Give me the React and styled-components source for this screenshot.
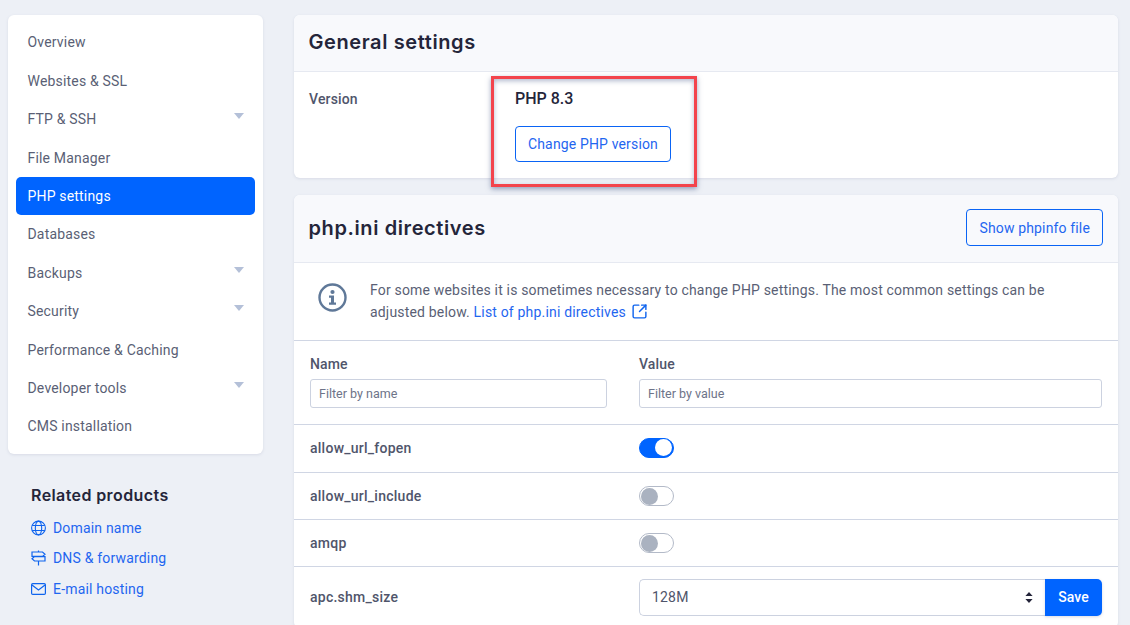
import React from "react";
import styled, { createGlobalStyle } from "styled-components";
import { SquareArrowOutUpRight } from "lucide-react";

const GlobalStyle = createGlobalStyle`
  * { box-sizing: border-box; }
  html, body {
    margin: 0;
    height: 625px;
    overflow: hidden;
    background: #edf0f6;
    font-family: Roboto, "Liberation Sans", sans-serif;
    font-size: 14px;
    color: #50556b;
  }
`;

const Page = styled.div`
  display: flex;
  align-items: flex-start;
  gap: 31px;
  padding: 15px 12px 0 8px;
`;

const Sidebar = styled.aside`
  width: 255px;
  flex-shrink: 0;
`;

const Card = styled.div`
  background: #fff;
  border-radius: 6px;
  box-shadow: 0 1px 3px rgba(120, 130, 160, 0.18);
`;

const Menu = styled(Card)`
  padding: 8.3px 8px;
  display: flex;
  flex-direction: column;
`;

const MenuItem = styled.a`
  height: 38.4px;
  display: flex;
  align-items: center;
  justify-content: space-between;
  padding: 0 11px 0 11.5px;
  border-radius: 5px;
  font-size: 14px;
  letter-spacing: 0.18px;
  color: ${(p) => (p.$active ? "#fff" : "#5a5f75")};
  background: ${(p) => (p.$active ? "#0064ff" : "transparent")};
`;

const Caret = styled.svg`
  width: 10px;
  height: 6px;
  margin-top: -6px;
  fill: #b4c0d8;
`;

const Related = styled.div`
  padding: 31px 23px 0;
`;

const RelatedTitle = styled.h4`
  margin: 0 0 8px;
  font-family: Inter, sans-serif;
  font-size: 16px;
  font-weight: 600;
  line-height: 20px;
  letter-spacing: 0.4px;
  color: #24253a;
`;

const RelatedLink = styled.a`
  display: flex;
  align-items: center;
  gap: 7px;
  height: 30.4px;
  font-size: 14px;
  letter-spacing: 0.18px;
  color: #1f66f0;
  svg { flex-shrink: 0; color: #0f64ee; }
`;

const Main = styled.main`
  flex: 1;
  min-width: 0;
  display: flex;
  flex-direction: column;
  gap: 17px;
`;

const Panel = styled(Card)``;

const PanelHeader = styled.header`
  height: ${(p) => p.$height}px;
  display: flex;
  align-items: center;
  justify-content: space-between;
  padding: 0 15px 2px 14.5px;
  background: #f8f9fc;
  border-bottom: 1px solid #e6e9f1;
  border-radius: 6px 6px 0 0;
`;

const PanelTitle = styled.h2`
  margin: 0;
  font-family: Inter, sans-serif;
  font-size: 20px;
  font-weight: 600;
  letter-spacing: 0.6px;
  color: #24253a;
`;

const OutlineButton = styled.button`
  height: ${(p) => p.$height}px;
  padding: 0 12px;
  background: transparent;
  border: 1px solid #0a64f5;
  border-radius: 4px;
  font: 400 14px Roboto, sans-serif;
  letter-spacing: 0.15px;
  color: #1f66f0;
`;

const VersionRow = styled.div`
  display: grid;
  grid-template-columns: 206px 1fr;
  height: 106px;
  padding: 17px 15px 0;
`;

const FieldLabel = styled.span`
  font-size: 14px;
  font-weight: 500;
  line-height: 20px;
  letter-spacing: 0.15px;
  color: #50556b;
`;

const VersionValue = styled.div`
  position: relative;
  display: flex;
  flex-direction: column;
  align-items: flex-start;
  gap: 17px;
`;

const VersionText = styled.strong`
  font-size: 16px;
  font-weight: 500;
  line-height: 20px;
  color: #24253a;
`;

const Highlight = styled.div`
  position: absolute;
  left: -24px;
  top: -13px;
  width: 206px;
  height: 111px;
  border: 3px solid #f3444c;
  box-shadow: 0 2px 5px rgba(60, 80, 130, 0.5), inset 0 2px 5px rgba(60, 80, 130, 0.4);
  pointer-events: none;
`;

const Notice = styled.div`
  display: flex;
  align-items: center;
  gap: 23px;
  height: 78px;
  padding: 0 16px 2px 24px;
  border-bottom: 1px solid #d0d6e4;
`;

const NoticeIcon = styled.svg`
  flex-shrink: 0;
  margin-top: -6px;
`;

const NoticeText = styled.p`
  margin: 0;
  font-size: 14px;
  line-height: 22px;
  letter-spacing: 0.18px;
  color: #5a5f75;

  a {
    color: #1f66f0;
  }

  svg {
    margin-left: 5px;
    vertical-align: -3px;
    color: #0f64ee;
  }
`;

const Row = styled.div`
  display: grid;
  grid-template-columns: 329px 1fr;
  align-items: center;
  height: ${(p) => p.$height}px;
  padding: 0 16px ${(p) => p.$nudge || 0}px;
  border-bottom: 1px solid #d0d6e4;
`;

const FilterRow = styled(Row)`
  align-items: start;
  padding-top: 13px;
`;

const FilterColumn = styled.label`
  display: flex;
  flex-direction: column;
  gap: 5px;
  padding-right: ${(p) => p.$gap}px;
`;

const FilterInput = styled.input`
  height: 29px;
  padding: 0 8px;
  border: 1px solid #ccd2e0;
  border-radius: 3px;
  font: 400 12.5px Roboto, sans-serif;
  color: #50556b;
  outline: none;

  &::placeholder {
    color: #6d7388;
    opacity: 1;
  }
`;

const DirectiveName = styled.span`
  font-size: 14px;
  font-weight: 500;
  letter-spacing: 0.25px;
  color: #50556b;
`;

const Toggle = styled.span`
  width: 35px;
  height: 20px;
  display: flex;
  align-items: center;
  justify-content: ${(p) => (p.$on ? "flex-end" : "flex-start")};
  padding: 0 1px;
  border-radius: 10px;
  border: 1px solid ${(p) => (p.$on ? "#0064ff" : "#b3bac8")};
  background: ${(p) => (p.$on ? "#0064ff" : "#fff")};

  &::after {
    content: "";
    width: 17px;
    height: 17px;
    border-radius: 50%;
    background: ${(p) => (p.$on ? "#fff" : "#aab2c0")};
  }
`;

const SelectGroup = styled.div`
  display: flex;
`;

const Select = styled.select`
  flex: 1;
  height: 37px;
  padding: 0 12px;
  appearance: none;
  border: 1px solid #ccd2e0;
  border-right: 0;
  border-radius: 5px 0 0 5px;
  font: 400 14px Roboto, sans-serif;
  letter-spacing: 0.18px;
  color: #50556b;
  background: #fff url("data:image/svg+xml,%3Csvg xmlns='http://www.w3.org/2000/svg' width='8' height='11'%3E%3Cpath fill='%2324253a' d='M4 0l3.6 4H.4zM4 11L.4 7h7.2z'/%3E%3C/svg%3E") no-repeat right 12px center;
`;

const SaveButton = styled.button`
  width: 57px;
  height: 37px;
  border: 0;
  border-radius: 0 5px 5px 0;
  background: #0064ff;
  font: 500 14px Roboto, sans-serif;
  color: #fff;
  box-shadow: 0 1px 3px rgba(120, 130, 160, 0.3);
`;

const GlobeIcon = () => (
  <svg width="15" height="16" viewBox="0 0 15 15" fill="none" stroke="currentColor" strokeWidth="1.1">
    <circle cx="7.5" cy="7.5" r="6.9" />
    <ellipse cx="7.5" cy="7.5" rx="3.2" ry="6.9" />
    <path d="M1.2 5h12.6M1.2 10h12.6" />
  </svg>
);

const MailIcon = () => (
  <svg width="15" height="16" viewBox="0 0 15 16" fill="none" stroke="currentColor" strokeWidth="1.2">
    <rect x="0.6" y="2.6" width="13.8" height="10.8" rx="1.2" />
    <path d="M1 4l6.5 5L14 4" />
  </svg>
);

const Signpost = () => (
  <svg width="15" height="16" viewBox="0 0 15 16" fill="none" stroke="currentColor" strokeWidth="1.2">
    <path d="M7.5 0.5v15" />
    <path d="M1 2h10.5L14 4.2 11.5 6.4H1z" fill="#edf0f6" />
    <path d="M14 6.6H3.5L1 8.8l2.5 2.2H14z" fill="#edf0f6" />
  </svg>
);

const InfoIcon = () => (
  <NoticeIcon width="29" height="29" viewBox="0 0 29 29" fill="none">
    <circle cx="14.5" cy="14.5" r="13" stroke="#5f7898" strokeWidth="2.4" />
    <circle cx="14.5" cy="9" r="2.1" fill="#5f7898" />
    <path d="M11 12.5h5v7h2v2.2h-7v-2.2h2v-4.8h-2z" fill="#5f7898" />
  </NoticeIcon>
);

const menu = [
  { label: "Overview" },
  { label: "Websites & SSL" },
  { label: "FTP & SSH", caret: true },
  { label: "File Manager" },
  { label: "PHP settings", active: true },
  { label: "Databases" },
  { label: "Backups", caret: true },
  { label: "Security", caret: true },
  { label: "Performance & Caching" },
  { label: "Developer tools", caret: true },
  { label: "CMS installation" },
];

const directives = [
  { name: "allow_url_fopen", on: true, height: 48, nudge: 2 },
  { name: "allow_url_include", on: false, height: 47 },
  { name: "amqp", on: false, height: 47 },
];

const App = () => (
  <>
    <GlobalStyle />
    <Page>
      <Sidebar>
        <Menu>
          {menu.map((item) => (
            <MenuItem key={item.label} $active={item.active}>
              {item.label}
              {item.caret && (
                <Caret viewBox="0 0 10 6">
                  <path d="M0 0h10L5 6z" />
                </Caret>
              )}
            </MenuItem>
          ))}
        </Menu>
        <Related>
          <RelatedTitle>Related products</RelatedTitle>
          <RelatedLink><GlobeIcon />Domain name</RelatedLink>
          <RelatedLink><Signpost />DNS &amp; forwarding</RelatedLink>
          <RelatedLink><MailIcon />E-mail hosting</RelatedLink>
        </Related>
      </Sidebar>
      <Main>
        <Panel>
          <PanelHeader $height={57}>
            <PanelTitle>General settings</PanelTitle>
          </PanelHeader>
          <VersionRow>
            <FieldLabel>Version</FieldLabel>
            <VersionValue>
              <VersionText>PHP 8.3</VersionText>
              <OutlineButton $height={36}>Change PHP version</OutlineButton>
              <Highlight />
            </VersionValue>
          </VersionRow>
        </Panel>
        <Panel>
          <PanelHeader $height={68}>
            <PanelTitle>php.ini directives</PanelTitle>
            <OutlineButton $height={37}>Show phpinfo file</OutlineButton>
          </PanelHeader>
          <Notice>
            <InfoIcon />
            <NoticeText>
              For some websites it is sometimes necessary to change PHP settings. The most common settings can be
              adjusted below. <a>List of php.ini directives<SquareArrowOutUpRight size={17} strokeWidth={2} /></a>
            </NoticeText>
          </Notice>
          <FilterRow $height={84}>
            <FilterColumn $gap={32}>
              <FieldLabel>Name</FieldLabel>
              <FilterInput placeholder="Filter by name" />
            </FilterColumn>
            <FilterColumn $gap={0}>
              <FieldLabel>Value</FieldLabel>
              <FilterInput placeholder="Filter by value" />
            </FilterColumn>
          </FilterRow>
          {directives.map((d) => (
            <Row key={d.name} $height={d.height} $nudge={d.nudge}>
              <DirectiveName>{d.name}</DirectiveName>
              <Toggle $on={d.on} />
            </Row>
          ))}
          <Row $height={61}>
            <DirectiveName>apc.shm_size</DirectiveName>
            <SelectGroup>
              <Select defaultValue="128M">
                <option>128M</option>
              </Select>
              <SaveButton>Save</SaveButton>
            </SelectGroup>
          </Row>
        </Panel>
      </Main>
    </Page>
  </>
);

export default App;
